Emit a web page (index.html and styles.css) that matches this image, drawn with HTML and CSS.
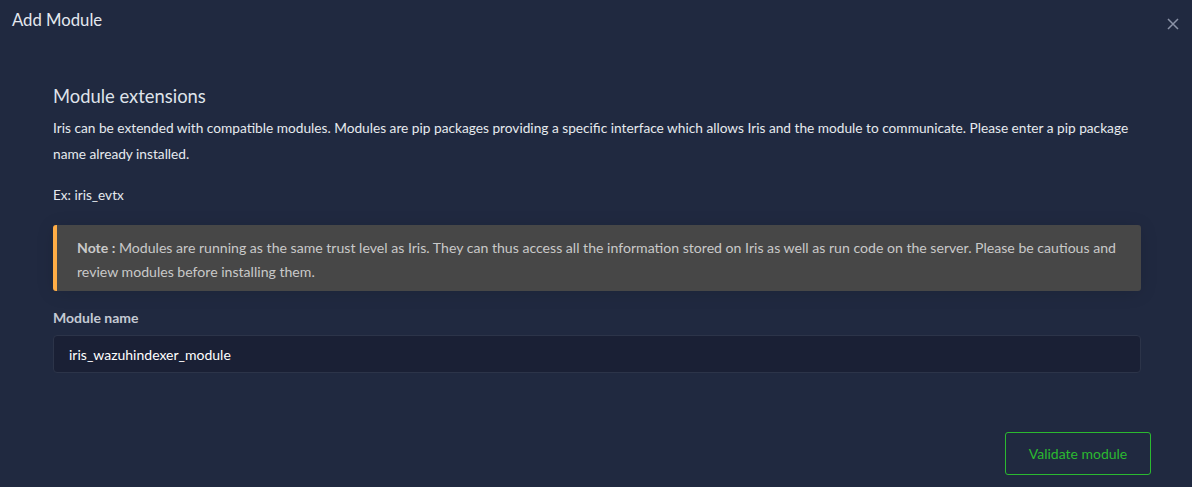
FILE: index.html
```html
<!DOCTYPE html>
<html>
<head>
<meta charset="utf-8">
<link rel="stylesheet" href="styles.css">
</head>
<body>
<div class="modal">
  <div class="modal-header">
    <h4 class="modal-title">Add Module</h4>
    <button class="close" aria-label="Close">
      <svg width="12" height="12" viewBox="0 0 12 12"><path d="M1 1L11 11M11 1L1 11" stroke="#8a92a6" stroke-width="1.5" fill="none"/></svg>
    </button>
  </div>
  <div class="modal-body">
    <h3 class="section-title">Module extensions</h3>
    <p class="desc">Iris can be extended with compatible modules. Modules are pip packages providing a specific interface which allows Iris and the module to communicate. Please enter a pip package name already installed.</p>
    <p class="example">Ex: iris_evtx</p>
    <div class="alert"><b>Note :</b> Modules are running as the same trust level as Iris. They can thus access all the information stored on Iris as well as run code on the server. Please be cautious and review modules before installing them.</div>
    <label class="label">Module name</label>
    <div class="input">iris_wazuhindexer_module</div>
  </div>
  <div class="modal-footer">
    <button class="btn-validate">Validate module</button>
  </div>
</div>
</body>
</html>
```
FILE: styles.css
```css
html, body {
  margin: 0;
  padding: 0;
  background: #202940;
  font-family: Lato, "Noto Sans", sans-serif;
  color: #dfe3ea;
}
.modal {
  width: 1192px;
  height: 487px;
  background: #202940;
  overflow: hidden;
}
.modal-header {
  display: flex;
  justify-content: space-between;
  align-items: flex-start;
  padding: 9px 12px 0 12px;
  height: 40px;
  box-sizing: border-box;
}
.modal-title {
  margin: 0;
  font-size: 16.7px;
  font-weight: 400;
  color: #e4e8ef;
  line-height: 22px;
}
.close {
  background: none;
  border: none;
  padding: 0;
  margin-top: 9px;
  margin-right: 1px;
  width: 12px;
  height: 12px;
  cursor: pointer;
}
.modal-body {
  padding: 44px 51px 0 53px;
}
.section-title {
  margin: 0;
  font-size: 18.4px;
  font-weight: 400;
  color: #dfe3ea;
  line-height: 24px;
}
.desc {
  margin: 7px 0 0 0;
  font-size: 13.7px;
  line-height: 26px;
  color: #e6e9ee;
}
.example {
  margin: 15px 0 0 0;
  font-size: 13.6px;
  line-height: 26px;
  color: #e6e9ee;
}
.alert {
  margin-top: 17px;
  background: #474747;
  border-left: 4px solid #ffad46;
  border-radius: 3px;
  padding: 11px 20px 7px 20px;
  font-size: 14.1px;
  line-height: 24px;
  color: #c9c9c9;
  box-shadow: 0 2px 18px rgba(0,0,0,0.12);
}
.alert b {
  font-weight: 700;
}
.label {
  display: block;
  margin-top: 17px;
  font-size: 14px;
  font-weight: 700;
  color: #c4c9d3;
  line-height: 20px;
}
.input {
  margin-top: 7px;
  height: 38px;
  box-sizing: border-box;
  background: #1a2035;
  border: 1px solid #2c3449;
  border-radius: 4px;
  padding: 0 15px;
  display: flex;
  align-items: center;
  font-size: 14px;
  color: #ffffff;
}
.modal-footer {
  display: flex;
  justify-content: flex-end;
  padding: 59px 41px 0 0;
}
.btn-validate {
  width: 146px;
  height: 43px;
  background: transparent;
  border: 1px solid #2bb930;
  border-radius: 3px;
  color: #2bb930;
  font-family: Lato, "Noto Sans", sans-serif;
  font-size: 14px;
  padding: 0;
}
```
